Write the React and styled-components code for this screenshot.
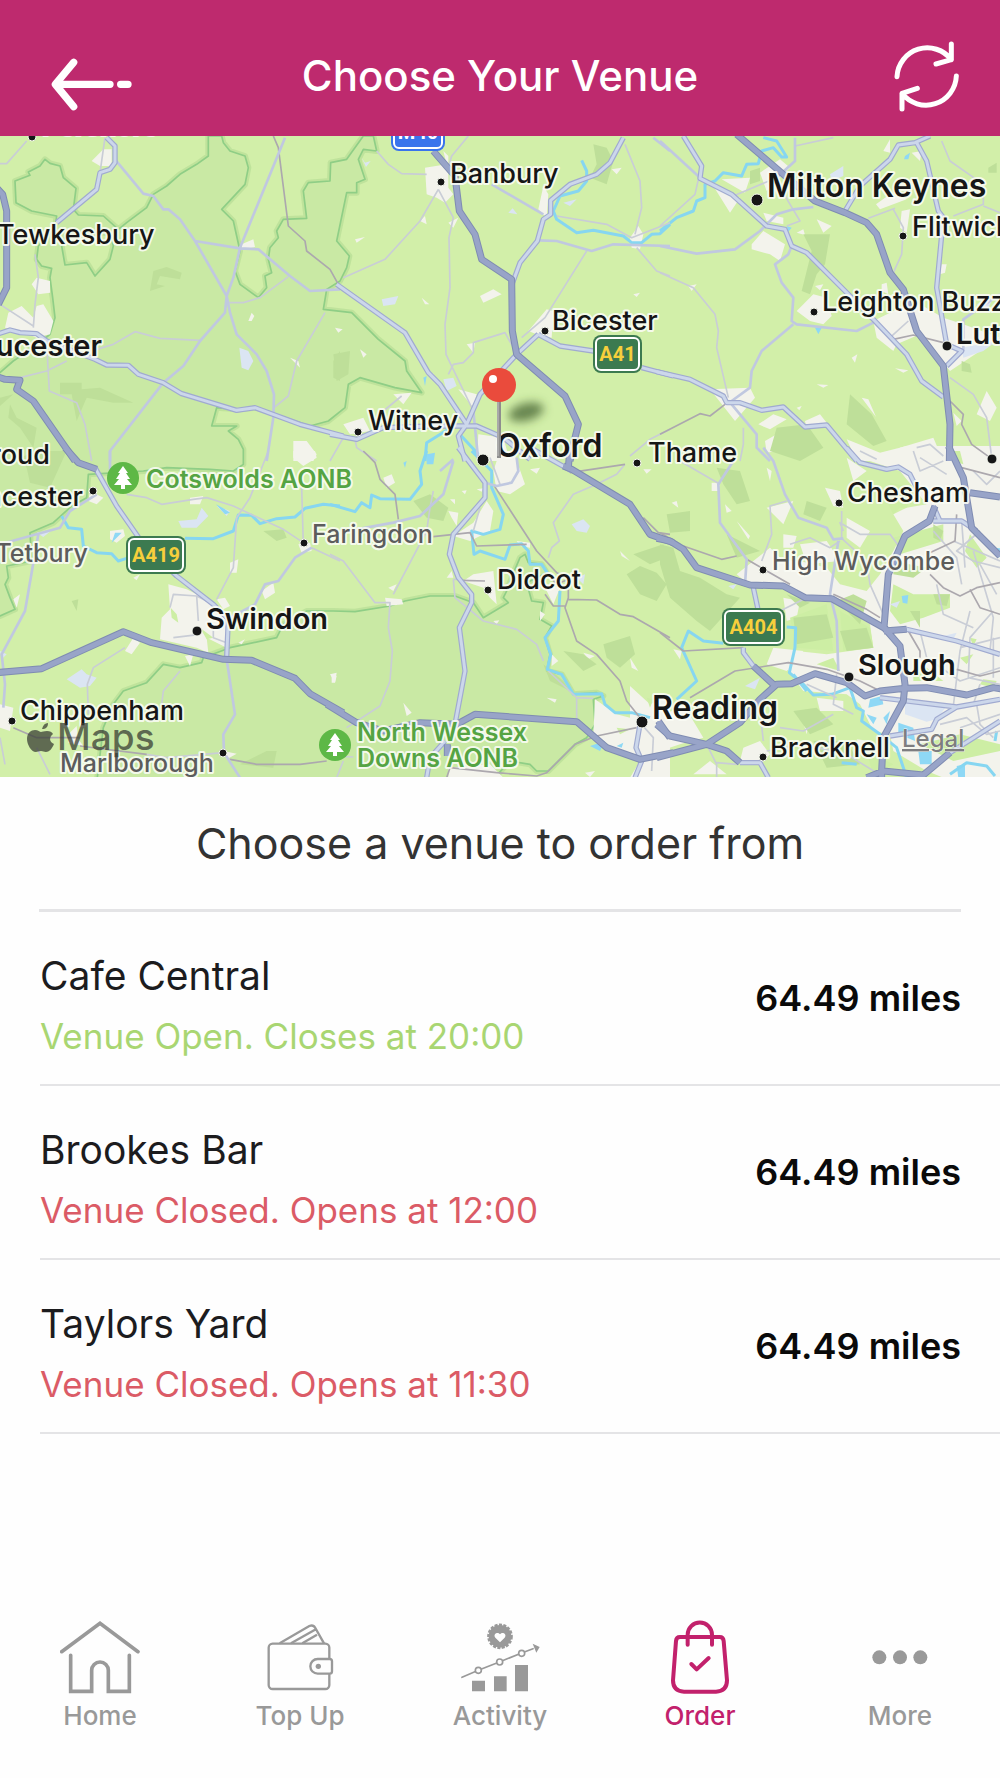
import React from 'react'
import styled, { createGlobalStyle } from 'styled-components'

const theme = {
  pink: '#be2a6e',
  pinkDark: '#c2216c',
  white: '#ffffff',
  page: '#fefefe',
  grey: '#999999',
  line: '#e4e4e6',
  open: '#a9d672',
  closed: '#db5b66',
}

const venues = [
  { name: 'Cafe Central', status: 'Venue Open. Closes at 20:00', open: true, distance: '64.49 miles' },
  { name: 'Brookes Bar', status: 'Venue Closed. Opens at 12:00', open: false, distance: '64.49 miles' },
  { name: 'Taylors Yard', status: 'Venue Closed. Opens at 11:30', open: false, distance: '64.49 miles' },
]

// protected areas, in terrain units
const parks = [
  'M625 0V60L590 85 540 115 500 150 460 175 440 215 380 260 355 280 310 240 235 237 220 220 228 157 190 125 180 90 150 82 135 70 120 90 85 108 90 118 45 135 48 200 95 225 170 240 165 275 115 330 110 370 125 390 155 397 150 425 158 485 165 545 150 595 100 635 40 675 0 710H-30V1440H0L45 1420 30 1385 15 1345 25 1325 20 1290 95 1275 90 1190 160 1160 215 1110 260 1085 265 1015 430 1005 500 995 630 1000 700 1005 730 985V940L715 910 685 885 710 870H635L650 815 715 820 770 815 930 870 985 855 1035 815 1045 745 1080 725 1185 755 1265 770 1220 705 1215 675 1135 610 1055 530 970 520 980 460 1020 435 1040 395 1048 360 1010 315 1040 170H1070V140L1095 130 1075 70 1090 40 1130 45 1120 0H1090L1040 70 992 80 990 135 925 140 910 165 920 247 850 250 830 285 835 305 810 335 805 370 815 410 795 420 800 455 775 485 720 445 705 405 720 345 700 255 665 220 735 145 745 95 735 60 690 45 670 20 665 0ZM185 330L195 387 260 380 285 420 330 370 340 330 330 290H200Z',
  'M290 1940L310 1775 340 1705 370 1665 440 1640 490 1585 540 1595 605 1580 610 1565 690 1535 830 1505 850 1465 920 1425H1000L1065 1427 1170 1410 1215 1395 1290 1380H1365L1420 1400 1450 1445 1525 1400 1510 1385 1520 1365 1545 1300 1560 1265 1575 1255 1585 1280 1625 1285 1640 1310 1580 1340 1595 1395 1630 1400 1620 1450 1655 1470 1635 1505 1650 1555 1640 1605 1685 1615 1720 1675 1790 1670 1810 1680 1780 1690 1785 1765 1760 1805 1725 1825 1645 1905H1610L1590 1885 1530 1875 1470 1940Z',
]

// the terrain is kept in six sheets, each with its own origin
const sheets = [
  {
    x: 0, y: -15,
    urban: 'M275 90L310 55H335V105H300ZM95 460L110 440 150 450V485L115 490ZM15 590L25 545 65 525 100 560 110 525 130 520 160 570 150 610 110 620 60 600ZM725 340L760 325 765 348 725 358ZM880 930H920L950 970 940 990H880ZM745 570L755 545 763 555 755 570ZM870 680L895 690 900 710Z',
    wood: 'M450 480L460 420 500 408 545 425 540 445 480 435 470 460 495 465ZM180 755H245V775L300 770 400 815H340L260 800 230 870 215 790H180ZM30 820L50 860 110 890 100 950 60 890 25 860ZM1000 690L1020 660V750L1000 740ZM0 800L40 790 0 825Z',
    estate: 'M718 650L745 660 760 690 745 718 725 710Z',
    rail: 'M820 15L835 50 865 285 915 330 920 360 990 415 1015 460',
    minor: 'M345 85L430 188 460 195 490 235H505L540 265 585 330 680 495 675 545 600 630 550 705 490 755 330 960V990M585 330L720 352 775 355 870 435 930 480 1020 475M855 20L720 350 700 440 680 495 690 545 710 610 770 670 800 720 822 790 820 860 800 990',
    lane: 'M680 515H730L780 500 865 437M600 628L480 622 405 602 340 640 290 655M975 545L890 690 865 795 822 830M0 98H20L80 30M315 20L300 125M105 370L115 440 105 520 100 590M0 520L100 585M60 740L140 720 200 690M140 640L148 780 230 815 255 880 275 990',
    main: 'M320 20L345 45V95L330 115 300 125 290 175 170 275M-10 610L30 597 60 605 110 608 140 630 285 685 320 702 385 703 415 730 490 755 545 788 710 838 765 830 900 880 1030 915',
    motorway: 'M-10 170L8 190 20 240V470L-5 520M-15 735L15 745 60 748 50 775 100 810 225 990',
  },
  {
    x: 990, y: -15,
    urban: 'M285 110L350 100 340 60 355 75V170L370 190 345 215 320 200 290 190ZM625 235L640 165 655 190 650 260ZM900 320L925 285 940 310 930 355 905 350ZM450 495L490 475 515 490 460 515ZM595 600L650 535 670 540 665 620 620 610ZM385 775L440 790 430 830ZM190 790L245 785 220 820ZM40 880L100 860 120 900 60 910ZM270 270L285 255 290 280ZM355 275L385 260 370 290ZM445 910L520 920 540 990H440ZM75 325L105 318 80 335ZM290 715L312 730 305 740ZM845 115L875 110 860 130ZM910 490L930 485 920 498ZM275 500L298 520 285 520ZM90 655L110 670 100 680ZM15 590L38 595 25 605ZM410 640L435 635 430 665Z',
    wood: 'M790 40L830 50 850 90 830 160 780 140 800 100ZM10 670L60 660 55 730 20 750Z',
    estate: 'M155 505L205 495 195 520 160 525ZM340 745L370 740 380 765 350 780ZM535 245L548 232 562 250ZM700 215L740 205 720 225ZM95 80L105 95 122 90 108 108Z',
    pond: 'M280 740L290 735 285 765Z',
    river: 'M755 88L770 120V150L745 180 690 195 670 240 680 265 740 305 790 298 880 315 905 335H935L965 310 990 308 1020 280M355 895L290 935 285 990M385 905L445 970',
    minor: 'M485 160L640 250M625 328L680 330 785 360 850 340 1020 345M970 20L1020 60M430 840L445 990',
    lane: 'M415 15L365 75 355 110M140 60L175 100 215 128 290 130M325 175L270 270 165 385 40 440M325 175L370 260 357 320 360 470 345 580 348 670 430 840M550 650L525 605 430 635V665L400 695 370 700 355 730M770 360L645 560 575 620M885 40L930 150 935 230 915 310M680 255L830 280 905 320 1020 275M920 350L980 420 1020 435M75 925L80 950 140 990M160 840L215 795M40 920L0 990M900 975L960 925 1020 895',
    main: 'M880 20L840 95 800 130 720 160 662 208V250L640 265 622 330 570 395 548 455M20 460L225 605 295 725 330 760 410 880M625 610L560 670 500 735 450 790 410 880 385 915 405 990M0 910L80 925 160 890 300 885H440L520 920 600 985M625 610L690 645 790 660M935 710L1030 735',
    motorway: 'M310 60L375 135 388 240 435 310 455 385 545 445 547 600 560 670 705 795 745 880 735 920 720 990',
  },
  {
    x: 1980, y: -15,
    urban: 'M670 60L690 25V65ZM185 145L270 140 255 185ZM300 125L360 85 390 110 370 130 320 180ZM160 165L240 200 210 245ZM275 340L310 300 375 340 360 390 330 370 275 355ZM310 245L370 260V280L320 270ZM470 265L515 285 490 305ZM410 540L460 490 500 500 515 555 490 580 450 570ZM640 570L720 530 780 520 850 560 910 580 1020 620 960 660 870 720 780 610 710 640 700 660 650 620ZM150 775L270 770 285 800 225 870ZM295 880L340 850 380 865 330 895ZM315 930L350 910V960L320 965ZM435 870L480 850 500 875 440 895ZM560 925L660 965 650 990H590ZM980 780L1010 830 990 870 950 850ZM720 950L820 920 850 990H720ZM880 845L905 870 890 885ZM845 400H860L855 425 840 430ZM665 460L680 455 685 490 665 480ZM725 240L750 235 740 305 720 290ZM470 760L505 762 490 770ZM705 712L745 718 730 725ZM575 680L592 670 585 695ZM605 800L625 805 648 858ZM85 465L110 460 95 480ZM410 830L425 825 418 838ZM648 220L690 190 740 205 660 235ZM755 65L785 60 780 90ZM410 305L430 295 435 312ZM465 465L490 460 480 478Z',
    wood: 'M430 310L510 310 495 400 470 430 450 490 425 480 455 360ZM570 790L635 850 680 930 640 945 560 880ZM350 890L440 880 490 950 420 990 330 960ZM270 120L300 110V150L270 160ZM985 110L1010 95V125H985ZM905 690L930 700 935 725 905 720Z',
    estate: 'M510 130L550 105V135L515 150ZM905 650L1010 630 970 660 910 680ZM950 520L1000 500 980 540Z',
    pond: 'M735 75L750 65 745 85 732 85ZM465 590H485L475 610ZM380 285L395 290 385 302Z',
    river: 'M0 300L50 260 100 240 110 210 135 200V160L165 150 190 125 245 135 260 100 295 98 305 60 340 50 365 78H380L350 30 310 20',
    rail: 'M700 625L760 612 850 635M195 820L150 855 120 848 0 910M870 810L910 850 905 880 935 940 990 980',
    minor: 'M0 30L120 140M0 345L110 368 225 355 300 300 350 250 400 235 460 228M395 345L385 370 345 400 365 455 400 500 395 570 410 580 590 600 640 575M400 580L305 660 275 720 270 770 215 810M1020 490L960 530 910 565V660M215 820L290 910V950L330 990M405 20V90L350 140',
    lane: 'M0 425L100 470 165 550 175 600 170 650 205 800M115 145L105 190 0 285M700 235L730 290 725 370 700 425M350 140L220 195M405 45L520 20M625 262L705 232M845 30L870 90 970 160V220L880 255M870 740L940 790 980 860 995 980M250 890V940L240 990M360 170L420 270 380 285M970 225L1020 245M690 620L745 570M770 950L810 940 850 975M600 960L650 985',
    main: 'M70 15L125 105 120 142 215 190 320 285 375 295 395 345 440 365 545 470 640 565 740 670 785 750 850 798M810 15L765 35 715 42 690 85 600 165 555 240M770 35L800 90 835 240 850 260 830 470 860 640 905 660 860 705M-10 722L90 745 190 795 200 815H240L305 838 370 828 435 888 500 882 590 990',
    motorway: 'M230 10L370 130 465 210 555 245 620 275 650 310 690 425 730 475 770 600 850 705 870 880 868 990',
  },
  {
    x: 0, y: 945,
    urban: 'M505 400L560 415 590 430 640 455 690 520 680 590 620 560 625 605 590 590 480 565 485 500 510 475ZM375 600L400 560 420 575 395 610ZM270 120L310 140 290 160 265 150ZM330 240L370 235 375 255 350 275 330 265ZM785 420L820 395 825 425 795 445ZM690 335L715 325 710 365H690ZM0 760L40 770 30 840 0 830ZM880 0H945L950 20 910 45 880 20ZM670 900L710 908 680 925ZM895 280L930 275 935 300 905 305ZM555 615L580 610 570 645ZM990 670L1010 665 1005 695ZM570 140L610 135 600 160H570ZM40 445L60 430 50 470ZM205 850L230 825 235 865 250 885 205 875ZM650 445L675 440 690 465 670 475ZM715 575L735 565 725 580ZM400 380L420 370 410 388Z',
    wood: 'M60 20L110 0H200L150 110 90 95 80 50ZM720 940L800 900H830L820 950ZM790 240L850 235 860 260 830 270ZM215 450L235 445 230 480Z',
    field: 'M512 470L530 490 535 515 515 500ZM600 530L640 560 620 565Z',
    estate: 'M200 685L245 655 260 670 290 680 270 705 240 710ZM535 210L590 205 605 170 625 195 590 230 545 230ZM110 245L155 238 130 258ZM0 600L20 610 5 625ZM650 165L690 180 680 195Z',
    pond: 'M648 160L670 172 690 185 675 190ZM345 245H365L335 275Z',
    river: 'M185 195L205 230 245 235 250 285 290 305 335 308 355 330 380 322M555 262L640 263 700 240 715 192 755 193 780 218 830 203 885 198 915 172 970 160 1020 165',
    rail: 'M40 830L110 860H240M690 925L770 940H900L980 930M240 885L440 910',
    minor: 'M330 0V60M690 500L765 460 795 400 835 390 885 320 935 290M0 280L180 230 210 180 290 130M115 250L75 480 5 610 15 700 10 770M680 625L705 790 670 850 672 905 720 980',
    lane: 'M375 590L280 650 262 700 265 790M510 470L520 430 590 435 640 460M910 280L905 110M935 290L1020 330M650 445L700 350 710 200 750 140 805 0M380 130L440 140 485 160 580 145 620 140 700 165 850 235 910 275M440 910L500 920 670 905M485 760L490 720 540 660M590 435L595 510M0 860L15 940M110 890L150 970M520 560L600 550 580 530M640 520V560L680 575',
    main: 'M285 50L350 165 430 280 530 375 640 460 685 505 680 620',
    motorway: 'M195 -10L235 35 290 55M-10 665L125 653 370 542 455 575 670 625 755 628 885 682 930 728 1030 785',
  },
  {
    x: 990, y: 945,
    urban: 'M550 0L585 100 540 130 500 120 490 60 510 0ZM470 150L490 180 480 240 420 270 370 255 430 215ZM430 370L490 360 500 460 480 440 460 410 400 390ZM795 745L860 790 900 800V705L960 760 1020 730V980H900L930 930 850 890 790 850ZM160 80L185 70 195 95 170 110ZM165 440L215 445 220 460 170 465ZM350 380L365 360 370 380ZM355 180L385 185 380 225 365 200ZM220 755L245 785 230 795ZM640 400L690 410 670 460ZM665 610L685 630 665 645ZM900 620L925 660 905 650ZM870 300L900 330 875 315ZM760 605L795 615 775 625ZM650 740L680 745 675 755ZM355 950L480 940 520 980H355ZM5 670L20 675 15 695H5ZM630 480L645 490 630 510ZM600 55L630 50 620 68ZM175 410L200 400 190 420ZM560 270L600 275V290L570 285ZM395 120L410 118 405 130ZM360 145L375 145 375 160ZM440 115L460 112 455 122ZM765 965L795 960 780 978ZM490 510L508 508 500 520ZM940 55L965 55 950 68Z',
    wood: 'M250 150L300 130 355 170 340 210 290 200ZM820 580L900 555 915 610 870 650 830 620ZM890 370L930 345 980 365 1010 400 980 450 930 430ZM700 600L760 610 800 640 760 660ZM910 310L1000 280 1010 320 960 340ZM640 640L700 690 720 720 660 690Z',
    field: 'M860 830L900 835 870 850ZM950 740L970 745 960 770Z',
    estate: 'M725 220L760 205 780 225 770 245 740 240ZM740 380L765 370 760 400Z',
    pond: 'M290 10L315 5 310 40H290ZM780 885L825 870 810 900ZM860 885L880 875 875 890ZM220 35L230 30 225 50Z',
    river: 'M0 160L75 182 95 155 120 170 125 132 150 143 240 145 275 100 270 60 290 0M425 0L485 60V110L520 190 510 235 460 250 425 240 432 310 450 300 525 325 540 282 575 278 595 300 600 340 635 340 655 370M690 420L685 510 645 560 662 610 652 655 695 670 730 730 815 728 825 760 855 785 905 785 960 800',
    rail: 'M100 0L135 35 150 85 195 130 205 205M310 257L420 245 440 285 590 280M490 100L620 300 680 365 715 380V440L705 470 740 570 800 610 870 690 890 750 930 800M715 445L800 447 870 490 910 497 1020 560M395 388L465 390M720 65L885 40M940 200L985 245 1020 250M350 980L360 950 500 965 620 975 650 965 735 880 800 855 920 830M650 365L680 400 715 385M645 430L670 465H705',
    minor: 'M370 30L340 130 270 195 190 215 80 235M330 60L370 25M465 95L500 105 545 95 565 60 560 20',
    lane: 'M300 170L310 120M300 170L290 240 190 430M0 310L40 330 135 455H180L175 530 187 600 180 690 150 765 50 830M370 385L375 440 460 510 560 535 620 580 640 630M655 660L740 740V820M430 240L450 170M655 320L665 290 688 270 670 215 730 130 800 100 860 70 885 40M935 820L970 860 965 960M370 385H395M480 20L510 100M40 930L20 980M0 915L70 918M740 740L790 742',
    main: 'M600 -10L725 60M385 -10L465 95V140L370 250 358 310 385 380 425 430V455L388 530 405 660 375 820M930 820L918 890 935 930 915 980M345 870L300 920 290 980',
    motorway: 'M-10 760L80 815 160 840 270 815 380 820 435 790 740 812 830 890 930 925 1030 905M352 880V915M985 810L1020 860M720 -10L715 50M700 45L725 55 900 160 960 250 1030 275',
  },
  {
    x: 1980, y: 945,
    urban: 'M600 20L740 -15H1020V980H850L800 960 700 900 690 850 640 840 600 760 560 730 430 720 370 640 410 600 500 610 640 590 630 520 520 450 430 430 380 400 350 330 420 330 500 350 540 400 620 420 660 370 700 300 730 240 700 190 740 170 800 160 720 60ZM230 370L330 290 380 340 400 410 260 395ZM0 800L70 760 130 860 60 880 0 900ZM250 890L300 870 330 910 300 940 240 930ZM495 110L540 120 550 170 520 165ZM320 170L400 150 370 220ZM370 250L410 255 400 290H370ZM560 200L630 240 600 290 560 260ZM470 740L550 750V780H480ZM340 590L430 600 380 660 320 640ZM155 95H180L175 120H155ZM230 210L270 255 265 265ZM195 160L215 180 200 185ZM560 20L620 60 580 90ZM370 440L420 450 410 500 380 510ZM420 280L500 270 540 330 440 340ZM35 155L50 150 55 170ZM320 50L335 60 330 90ZM40 595L65 600 60 625ZM100 970L150 930 200 970ZM590 865L630 870 600 885ZM430 815L445 825 440 850Z',
    field: 'M700 400L760 430 870 430 870 470 790 500 720 520 690 480ZM700 260L850 220 850 270 720 310ZM690 95L760 110 740 170 690 170ZM930 250L980 320 950 350 915 300ZM540 480L630 530 640 590 550 600ZM390 500L500 460 520 600 410 590ZM620 900L700 940 640 975ZM970 685L1010 690 1000 710 960 700ZM860 0L900 0 910 40 880 30ZM670 130L740 150 700 190ZM470 640L520 620 540 660ZM930 560L950 565 940 585ZM900 620L940 610 920 640ZM760 640L800 650 850 690 760 690ZM780 880L900 850 1020 880V900L880 930Z',
    wood: 'M0 280L40 290 60 360 120 380 200 430 240 440 150 540 110 510 30 440 0 340ZM170 50L240 60 270 150 230 160 190 100ZM20 190L90 180V240L30 245ZM200 250L300 300 230 320ZM440 150L500 170 480 210 430 190ZM400 500L500 490 520 560 410 580ZM530 450L580 430 620 450 600 520ZM540 540L620 530 640 590 560 600ZM400 780L470 770 520 820 450 850ZM460 870L560 870 600 940 500 950ZM380 430L450 455 420 470ZM700 330L800 350 760 380 700 370ZM820 430H870L860 465 830 460ZM750 480H780V530ZM820 220L850 240 840 270 820 260Z',
    estate: 'M735 755L860 765 830 805 800 812 735 790ZM255 705L300 680 285 715ZM830 560L890 545 880 565ZM690 460L720 450 710 470ZM205 405L230 400 220 415Z',
    pond: 'M630 745L665 735 670 760 625 770ZM715 815L760 830 765 870 715 850ZM775 900L815 900V940H780ZM725 435L745 432 742 458 728 455ZM1000 290L1020 292V320ZM670 800L690 780 680 820ZM890 945L915 940V980H895ZM620 790L650 800 640 820Z',
    river: 'M190 577L130 570 85 540 65 590 110 690 50 745M380 528L407 530 405 590 388 665 430 700 460 732 515 730 570 710 590 770 610 780 605 810 660 850 710 890 740 980M870 970L920 935 980 945 1005 975M400 670L440 720M545 935L590 940M1010 840L1005 870',
    rail: 'M0 545L70 600 250 590M90 740L225 660 385 635 500 655 600 690 650 715M70 285L185 325 230 315M260 325L390 400M520 430L620 475 660 500M810 370L850 410 900 435 950 410 1020 395M745 540L780 600V620M890 190L885 270 800 310M905 50L1020 80M0 245L60 280M930 415L960 470 1020 490M890 655L960 675 1020 660',
    minor: 'M310 -10L340 30 375 130 415 200 500 230 520 265 550 262M220 30L175 100 180 215 260 325 255 400M535 270L510 430 530 510 535 660',
    lane: 'M545 180V265M545 262L620 330 630 400 670 490M380 150L330 165 335 250 305 330M60 30L180 100M905 210L915 350M930 480L900 600 880 765M960 240L890 300 940 330 1020 350M820 240L890 320 905 400M1000 480L930 560 925 680 1020 700M780 540L800 620 900 690 1020 650M840 820L920 800 980 850 1020 840M900 830L1020 790M760 0L780 60 850 30M830 400L850 490 940 530M140 880L170 940V980M170 935L230 940M310 870L300 780M320 900L430 880 560 910 690 990M530 670L520 760 580 790M550 240L540 215 600 250 690 250 720 290M940 300L970 400 1000 500 990 600M960 340L1010 430M1000 560V680M880 270L1020 330M940 60L980 100 1020 60M950 760L960 820 1000 860M440 440L360 480M520 790L430 840 360 830M390 280L450 260 510 290 540 270M960 700L940 760M900 590L1020 560M780 20L860 70M440 700L530 740',
    main: 'M560 -10L600 35 680 55 715 48 750 70 770 110M820 210H905L950 240M740 535L890 570 1020 610M280 410L295 480M250 590V605L280 645M240 935H300L325 980M870 905L1020 810M690 855L815 835 830 805 890 768 1020 745M660 740L890 768M820 165L840 210',
    motorway: 'M-10 262L30 270 70 295 110 350 270 402 370 405 435 440 515 443 680 535M865 -15L910 80 935 230 1020 315M930 125L1020 138M825 165L808 210 735 255 685 370 672 530 720 585 735 700 730 750 670 860 665 960V985M672 540L740 535M-10 920L140 880 240 815 300 745 350 700 395 698 465 668 560 695 615 735 660 720 735 712 800 710 920 732 1000 710 1030 715M340 700L280 645M-10 820L30 855 140 880 200 900 240 935M620 980L670 960 790 972 870 905',
  },
]

// fills come first, then lines from the thinnest up
const layers = [
  { key: 'urban', fill: '#f3f3ec' },
  { key: 'field', fill: '#cdeea4' },
  { key: 'wood', fill: '#bedf99' },
  { key: 'estate', fill: '#dbe5f3' },
  { key: 'pond', fill: '#8ed8f5' },
  { key: 'river', stroke: '#86d6f1', width: 9 },
  { key: 'lane', stroke: '#c9cdd6', width: 5 },
  { key: 'rail', stroke: '#aca8ae', width: 5 },
  { key: 'minor', stroke: '#c0c8e0', width: 8 },
  { key: 'main', stroke: '#a0aad0', width: 16 },
  { key: 'main', stroke: '#ccd7eb', width: 9 },
  { key: 'motorway', stroke: '#7f8cb2', width: 21 },
  { key: 'motorway', stroke: '#98a4c8', width: 15 },
]

const towns = [
  { name: 'Pershore', x: 42, y: -1, dot: [32, 1] },
  { name: 'Banbury', x: 450, y: 47, dot: [441, 46] },
  { name: 'Milton Keynes', x: 767, y: 61, size: 'city', dot: [757, 64] },
  { name: 'Flitwick', x: 912, y: 100, dot: [903, 100] },
  { name: 'Tewkesbury', x: -3, y: 108 },
  { name: 'Leighton Buzzard', x: 822, y: 175, dot: [814, 176] },
  { name: 'Luton', x: 956, y: 208, size: 'big', dot: [947, 210] },
  { name: 'Bicester', x: 552, y: 194, dot: [545, 195] },
  { name: 'Gloucester', x: 102, y: 220, size: 'big', end: true },
  { name: 'Witney', x: 368, y: 294, dot: [358, 296] },
  { name: 'Oxford', x: 496, y: 321, size: 'city', dot: [483, 324] },
  { name: 'Thame', x: 648, y: 326, dot: [637, 327] },
  { name: 'Stroud', x: 50, y: 328, end: true },
  { name: 'Cirencester', x: 83, y: 370, end: true, dot: [93, 355] },
  { name: 'Chesham', x: 847, y: 366, dot: [839, 367] },
  { name: 'Faringdon', x: 312, y: 407, soft: true, dot: [304, 407] },
  { name: 'Tetbury', x: 88, y: 426, soft: true, end: true },
  { name: 'High Wycombe', x: 772, y: 434, soft: true, dot: [763, 434] },
  { name: 'Didcot', x: 497, y: 453, dot: [488, 454] },
  { name: 'Swindon', x: 206, y: 493, size: 'big', dot: [197, 495] },
  { name: 'Slough', x: 858, y: 539, size: 'big', dot: [849, 541] },
  { name: 'Reading', x: 652, y: 583, size: 'city', dot: [642, 586] },
  { name: 'Chippenham', x: 20, y: 584, dot: [12, 585] },
  { name: 'Bracknell', x: 770, y: 621, dot: [763, 621] },
  { name: 'Marlborough', x: 60, y: 636, soft: true, dot: [223, 617] },
]

const shields = [
  { name: 'M40', x: 391, y: -23, w: 54, blue: true },
  { name: 'A41', x: 593, y: 199, w: 49 },
  { name: 'A419', x: 126, y: 400, w: 60 },
  { name: 'A404', x: 722, y: 472, w: 63 },
]

const dotRadius = { city: 6, big: 5 }

const Tree = ({ x, y }) => (
  <g transform={`translate(${x} ${y})`}>
    <circle r="16" fill="#5db846" />
    <path d="M0-12L5-5H3L7 1H4L9 7H2V11H-2V7H-9L-4 1H-7L-3-5H-5Z" fill="#fff" />
  </g>
)

const Terrain = () => (
  <svg width="1000" height="641" viewBox="0 0 3000 1923" aria-hidden="true">
    <rect width="3000" height="1923" fill="#d2efa9" />
    <g fill="#c9e9a4" fillRule="evenodd" strokeLinejoin="round">
      {parks.map((d, i) => (
        <g key={i}>
          <path d={d} stroke="#b3db93" strokeWidth="18" strokeOpacity="0.6" />
          <path d={d} stroke="#8fce86" strokeWidth="5" />
        </g>
      ))}
    </g>
    {layers.map((layer, i) => (
      <g
        key={i}
        fill={layer.fill || 'none'}
        stroke={layer.stroke || 'none'}
        strokeWidth={layer.width}
        strokeLinejoin="round"
      >
        {sheets.map((s, n) => s[layer.key] && (
          <path key={n} d={s[layer.key]} transform={`translate(${s.x} ${s.y})`} />
        ))}
      </g>
    ))}
  </svg>
)

const Pin = () => (
  <g>
    <defs>
      <filter id="pinBlur" x="-50%" y="-100%" width="200%" height="300%">
        <feGaussianBlur stdDeviation="5" />
      </filter>
    </defs>
    <ellipse cx="526" cy="276" rx="18" ry="9" fill="#3d5a2a" fillOpacity="0.7" transform="rotate(-15 526 276)" filter="url(#pinBlur)" />
    <path d="M499 264V322" stroke="#8e8e8e" strokeWidth="4" />
    <path d="M498 264V320" stroke="#c4c4c4" strokeWidth="1" />
    <circle cx="499" cy="249" r="17" fill="#ea4b3c" />
    <circle cx="493" cy="243" r="4" fill="#fff" />
  </g>
)

const VenueMap = () => (
  <Map viewBox="0 0 1000 641" role="img" aria-label="Map of venues">
    <Terrain />
    {shields.map((s) => (
      <g key={s.name} transform={`translate(${s.x} ${s.y})`}>
        <rect width={s.w} height="38" rx="8" fill={s.blue ? '#3a74ec' : '#3c7a50'} />
        <rect x="3" y="3" width={s.w - 6} height="32" rx="5" fill="none" stroke="#fff" strokeWidth="2" />
        <ShieldText x={s.w / 2} y="26" $blue={s.blue}>{s.name}</ShieldText>
      </g>
    ))}
    {towns.map((t) => (
      <g key={t.name}>
        {t.dot && <Dot cx={t.dot[0]} cy={t.dot[1]} r={dotRadius[t.size] || 4} />}
        <Town x={t.x} y={t.y} $size={t.size} $soft={t.soft} $end={t.end}>{t.name}</Town>
      </g>
    ))}
    <Dot cx="992" cy="323" r="5" />
    <Tree x={123} y={342} />
    <ParkName x="146" y="352">Cotswolds AONB</ParkName>
    <Tree x={335} y={609} />
    <ParkName x="357" y="605">North Wessex</ParkName>
    <ParkName x="357" y="631">Downs AONB</ParkName>
    <Pin />
    <g fill="#3a3f35" fillOpacity="0.75">
      <path d="M42 593C43 589 45 587 48 587C48 591 46 593 42 593ZM47 595C50 595 52 596 53 598C49 601 49 606 54 608C52 613 49 616 46 616C44 616 43 615 41 615C39 615 37 616 36 616C31 616 27 608 27 603C27 597 31 594 35 594C38 594 40 596 41 596C42 596 44 595 47 595Z" />
      <Brand x="57" y="614">Maps</Brand>
    </g>
    <a href="#legal">
      <Legal x="902" y="611">Legal</Legal>
    </a>
  </Map>
)

const HomeIcon = () => (
  <svg viewBox="178 62 240 228" fill="none" stroke="currentColor" strokeWidth="11" strokeLinecap="round">
    <path d="M183 157L298 72 412 157" />
    <path d="M210 168V276H273V213A25 25 0 0 1 323 213V276H386V168" />
  </svg>
)

const WalletIcon = () => (
  <svg viewBox="777 62 240 228" fill="none" stroke="currentColor" strokeWidth="7">
    <path d="M836 132L925 80Q937 75 943 86L969 132M870 132L942 91M904 132L948 106" />
    <rect x="803" y="133" width="182" height="136" rx="12" />
    <path d="M950 179H986Q993 179 993 186V216Q993 223 986 223H950A22 22 0 0 1 950 179Z" fill={theme.page} />
    <circle cx="952" cy="201" r="8" fill="currentColor" stroke="none" />
  </svg>
)

const ActivityIcon = () => (
  <svg viewBox="1377 62 240 228" fill="currentColor">
    <circle cx="1497" cy="111" r="34" />
    <circle cx="1497" cy="111" r="34" fill="none" stroke="currentColor" strokeWidth="9" strokeDasharray="9 4" />
    <path d="M1497 129L1483 115C1475 105 1489 95 1497 105C1505 95 1519 105 1511 115Z" fill={theme.page} />
    <path d="M1383 234L1432 213 1495 188 1562 161 1596 148" fill="none" stroke="currentColor" strokeWidth="5" strokeLinecap="round" />
    <path d="M1595 133L1616 143 1606 160Z" />
    <g fill={theme.page} stroke="currentColor" strokeWidth="5">
      <circle cx="1432" cy="213" r="9" />
      <circle cx="1496" cy="188" r="9" />
      <circle cx="1562" cy="162" r="9" />
    </g>
    <path d="M1413 244H1452V276H1413ZM1479 231H1517V276H1479ZM1542 197H1581V276H1542Z" />
  </svg>
)

const BagIcon = () => (
  <svg viewBox="478 62 240 228" fill="none" stroke="currentColor" strokeWidth="12" strokeLinecap="round" strokeLinejoin="round">
    <path d="M538 113H657Q668 113 669 125L679 243Q679 276 646 277H550Q517 276 517 243L526 125Q527 113 538 113Z" />
    <path d="M561 136V106A36 36 0 0 1 634 106V136" />
    <path d="M572 194L588 210 624 176" />
  </svg>
)

const MoreIcon = () => (
  <svg viewBox="1080 62 240 228" fill="currentColor">
    <circle cx="1138" cy="174" r="21" />
    <circle cx="1200" cy="174" r="21" />
    <circle cx="1261" cy="174" r="21" />
  </svg>
)

const tabs = [
  { name: 'Home', Icon: HomeIcon },
  { name: 'Top Up', Icon: WalletIcon },
  { name: 'Activity', Icon: ActivityIcon },
  { name: 'Order', Icon: BagIcon, active: true },
  { name: 'More', Icon: MoreIcon },
]

const App = () => {
  return (
    <AppContainer>
      <GlobalStyle />
      <Header>
        <HeaderButton type="button" aria-label="Back">
          <svg viewBox="30 -28 276 270" strokeWidth="22">
            <path d="M131 66L76 132 131 199M85 132H240M272 132H294" />
          </svg>
        </HeaderButton>
        <Title>Choose Your Venue</Title>
        <HeaderButton type="button" aria-label="Refresh">
          <svg viewBox="-36 0 276 270" strokeWidth="15">
            <path d="M51 137A91 91 0 0 1 214 86M214 39V86L168 99" />
            <path d="M229 135A91 91 0 0 1 66 187M66 234V187L112 172" />
          </svg>
        </HeaderButton>
      </Header>

      <VenueMap />

      <Content>
        <Heading>Choose a venue to order from</Heading>
        <VenueList>
          {venues.map((venue) => (
            <Venue key={venue.name}>
              <VenueInfo>
                <VenueName>{venue.name}</VenueName>
                <Status $open={venue.open}>{venue.status}</Status>
              </VenueInfo>
              <Distance>{venue.distance}</Distance>
            </Venue>
          ))}
        </VenueList>
      </Content>

      <TabBar>
        {tabs.map(({ name, Icon, active }) => (
          <Tab key={name} href="#" $active={active}>
            <Icon />
            {name}
          </Tab>
        ))}
      </TabBar>
    </AppContainer>
  )
}

export default App


const GlobalStyle = createGlobalStyle`
  body {
    margin: 0;
    background: ${theme.page};
    font-family: Inter, 'Liberation Sans', sans-serif;
  }
`

const AppContainer = styled.div`
  min-height: 100vh;
  display: flex;
  flex-direction: column;
`

const Header = styled.header`
  display: grid;
  grid-template-columns: 1fr auto 1fr;
  align-items: center;
  padding: 31px 40px 15px;
  background: ${theme.pink};
  color: ${theme.white};
`

const HeaderButton = styled.button`
  padding: 0;
  border: none;
  background: none;
  color: inherit;
  cursor: pointer;

  &:last-child {
    justify-self: end;
  }

  &:first-child {
    justify-self: start;
  }

  svg {
    display: block;
    width: 92px;
    height: 90px;
    fill: none;
    stroke: currentColor;
    stroke-linecap: round;
    stroke-linejoin: round;
  }
`

const Title = styled.h1`
  margin: 0;
  font-size: 42px;
  line-height: 48px;
  font-weight: 500;
`

// map
const Map = styled.svg`
  display: block;
  width: 100%;
  height: auto;
`

const MapText = styled.text`
  font-size: 27px;
  font-weight: 500;
  stroke: rgba(250, 252, 245, 0.9);
  stroke-width: 4px;
  stroke-linejoin: round;
  paint-order: stroke;
`

const townSizes = { city: '32px', big: '29px' }

const Town = styled(MapText)`
  font-size: ${({ $size, $soft }) => townSizes[$size] || ($soft ? '25px' : '27px')};
  font-weight: ${({ $size }) => ($size ? 600 : 500)};
  fill: ${({ $soft }) => ($soft ? '#5c5c5c' : '#161616')};
  text-anchor: ${({ $end }) => ($end ? 'end' : 'start')};
`

const ParkName = styled(MapText)`
  font-size: 25px;
  font-weight: 600;
  fill: #55a443;
`

const Dot = styled.circle`
  fill: #161616;
  stroke: #f6f9ef;
  stroke-width: 1px;
`

const ShieldText = styled.text`
  font-family: Roboto, sans-serif;
  font-size: 20px;
  font-weight: 700;
  text-anchor: middle;
  fill: ${({ $blue }) => ($blue ? '#ffffff' : '#f7cf3c')};
`

const Brand = styled.text`
  font-size: 37px;
  font-weight: 500;
`

const Legal = styled(MapText)`
  font-size: 24px;
  fill: #7d7d80;
  stroke-width: 1px;
  text-decoration: underline;
`

// list
const Content = styled.main`
  flex: 1;
`

const Heading = styled.h2`
  margin: 0 39px;
  padding: 40px 0;
  border-bottom: 3px solid ${theme.line};
  color: #333333;
  font-size: 43px;
  line-height: 52px;
  font-weight: 400;
  text-align: center;
`

const VenueList = styled.ul`
  margin: 0;
  padding: 0 0 0 40px;
  list-style: none;
`

const Venue = styled.li`
  display: flex;
  align-items: center;
  justify-content: space-between;
  padding-right: 39px;
  border-bottom: 2px solid ${theme.line};
`

const VenueInfo = styled.div`
  padding: 38px 0 26px;
`

const VenueName = styled.div`
  margin-bottom: 12px;
  color: #1c1c1e;
  font-size: 39px;
  line-height: 52px;
`

const Status = styled.div`
  color: ${({ $open }) => ($open ? theme.open : theme.closed)};
  font-size: 35px;
  line-height: 44px;
`

const Distance = styled.div`
  color: #0a0a0a;
  font-size: 36px;
  line-height: 44px;
  font-weight: 600;
`

const TabBar = styled.nav`
  display: grid;
  grid-template-columns: repeat(5, 1fr);
  padding: 20px 0 46px;
`

const Tab = styled.a`
  display: flex;
  flex-direction: column;
  align-items: center;
  gap: 4px;
  color: ${({ $active }) => ($active ? theme.pinkDark : theme.grey)};
  font-size: 26px;
  line-height: 32px;
  font-weight: 500;
  text-decoration: none;

  svg {
    width: 80px;
    height: 76px;
  }
`
